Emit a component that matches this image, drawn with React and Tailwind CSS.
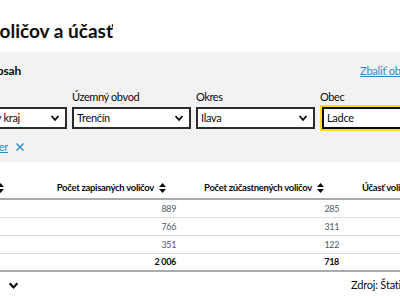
import React from 'react';

function SortIcon() {
  return (
    <svg width="7" height="10" viewBox="0 0 7 10" className="shrink-0">
      <path d="M3.5 0 L7 4 L0 4 Z" fill="#0b0c0c" />
      <path d="M3.5 10 L7 6 L0 6 Z" fill="#0b0c0c" />
    </svg>
  );
}

function Chevron({ size = 10, width = 1.8 }) {
  return (
    <svg width={size} height={size} viewBox="0 0 10 10" className="shrink-0">
      <path d="M1.5 3 L5 6.8 L8.5 3" fill="none" stroke="#0b0c0c" strokeWidth={width} />
    </svg>
  );
}

function Select({ value, className = '', focused = false }) {
  return (
    <div
      className={`h-[22px] bg-white flex items-center justify-between pl-[3px] pr-[5px] ${
        focused ? 'border-2 border-[#0b0c0c] outline-2 outline-[#ffdf0f]' : 'border-2 border-[#2b2b2b]'
      } ${className}`}
    >
      <span className="text-[11px] tracking-[-0.3px] text-[#0b0c0c] whitespace-nowrap">{value}</span>
      {!focused && <Chevron />}
    </div>
  );
}

const rows = [
  { a: '889', b: '285' },
  { a: '766', b: '311' },
  { a: '351', b: '122' },
];

export default function App() {
  return (
    <div className="w-[400px] h-[300px] overflow-hidden bg-white font-['Lato',sans-serif] text-[#0b0c0c]">
      {/* title */}
      <div className="h-[52px] flex items-center">
        <div className="w-[113px] shrink-0 flex justify-end overflow-hidden">
          <h1 className="text-[19px] font-bold whitespace-nowrap leading-none pt-[8px]">Počet voličov a účasť</h1>
        </div>
      </div>

      {/* filter panel */}
      <div className="h-[110px] bg-[#f2f2f2]">
        <div className="h-[36px] flex items-center justify-between pt-[2px]">
          <div className="w-[21px] shrink-0 flex justify-end overflow-hidden">
            <h2 className="text-[12px] tracking-[-0.2px] font-bold whitespace-nowrap">Obsah</h2>
          </div>
          <a className="ml-auto pl-[339px] text-[11px] tracking-[-0.2px] text-[#2b8cc4] underline whitespace-nowrap">Zbaliť obsah</a>
        </div>

        <div className="flex items-end">
          <div className="w-[67px] shrink-0 flex justify-end overflow-hidden">
            <Select value="Trenčiansky kraj" className="w-[124px] shrink-0" />
          </div>
          <div className="w-[119px] shrink-0 ml-[5px]">
            <div className="text-[11px] tracking-[-0.4px] leading-[18px] mb-[1px] whitespace-nowrap">Územný obvod</div>
            <Select value="Trenčín" />
          </div>
          <div className="w-[119px] shrink-0 ml-[5px]">
            <div className="text-[11px] tracking-[-0.4px] leading-[18px] mb-[1px] whitespace-nowrap">Okres</div>
            <Select value="Ilava" />
          </div>
          <div className="w-[119px] shrink-0 ml-[5px]">
            <div className="text-[11px] tracking-[-0.4px] leading-[18px] mb-[1px] whitespace-nowrap">Obec</div>
            <Select value="Ladce" focused className="ml-[2px]" />
          </div>
        </div>

        <div className="h-[36px] flex items-center gap-[8px]">
          <div className="w-[8px] shrink-0 flex justify-end overflow-hidden">
            <a className="text-[11px] tracking-[-0.3px] text-[#2b8cc4] underline whitespace-nowrap">Zrušiť filter</a>
          </div>
          <svg width="8" height="8" viewBox="0 0 8 8" className="shrink-0">
            <path d="M0.5 0.5 L7.5 7.5 M7.5 0.5 L0.5 7.5" stroke="#2b8cc4" strokeWidth="1.4" />
          </svg>
        </div>
      </div>

      {/* table */}
      <div className="-ml-[100px] w-[600px] pt-[16px]">
        <div className="h-[22px] flex items-center text-[9.5px] tracking-[-0.3px] font-bold border-b-2 border-[#a8abad]">
          <div className="w-[112px] shrink-0 flex justify-end items-center gap-[4px] pr-[8px]">
            <span className="whitespace-nowrap">Obec</span>
            <SortIcon />
          </div>
          <div className="w-[164px] shrink-0 flex justify-end items-center gap-[5px] pr-[10px]">
            <span className="whitespace-nowrap">Počet zapisaných voličov</span>
            <SortIcon />
          </div>
          <div className="w-[163px] shrink-0 flex justify-end items-center gap-[5px] pr-[15px]">
            <span className="whitespace-nowrap">Počet zúčastnených voličov</span>
            <SortIcon />
          </div>
          <div className="pl-[23px] whitespace-nowrap">Účasť voličov v %</div>
        </div>
        {rows.map((r, i) => (
          <div key={i} className="h-[18px] flex items-center text-[9px] tracking-[-0.4px] text-[#505a5f] border-b border-[#dedede]">
            <div className="w-[112px] shrink-0" />
            <div className="w-[164px] shrink-0 text-right">{r.a}</div>
            <div className="w-[163px] shrink-0 text-right">{r.b}</div>
          </div>
        ))}
        <div className="h-[18px] flex items-center text-[9px] tracking-[-0.3px] font-bold border-b-2 border-[#a8abad]">
          <div className="w-[112px] shrink-0" />
          <div className="w-[164px] shrink-0 text-right">2 006</div>
          <div className="w-[163px] shrink-0 text-right">718</div>
        </div>
      </div>

      {/* footer */}
      <div className="h-[26px] flex items-center justify-between">
        <div className="pl-[8px]">
          <Chevron size={11} width={2} />
        </div>
        <div className="pl-[332px] whitespace-nowrap text-[11px] tracking-[-0.2px]">Zdroj: Štatistický úrad SR</div>
      </div>
    </div>
  );
}
